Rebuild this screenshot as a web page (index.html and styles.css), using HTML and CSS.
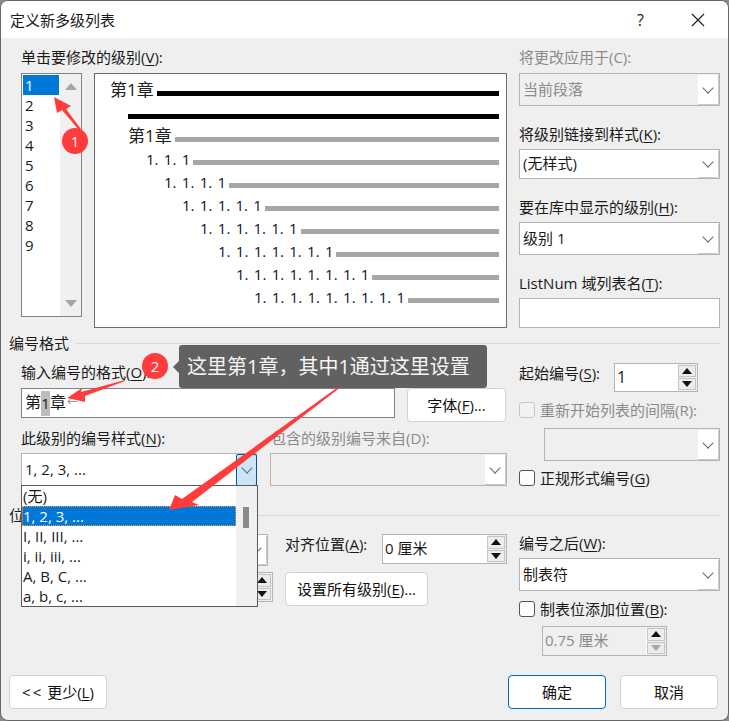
FILE: index.html
```html
<!DOCTYPE html>
<html lang="zh">
<head>
<meta charset="utf-8">
<title>定义新多级列表</title>
<link rel="stylesheet" href="styles.css">
</head>
<body>
<div class="dialog">
  <header class="titlebar">
    <span class="title">定义新多级列表</span>
    <span class="help">?</span>
    <svg class="close" width="14" height="14" viewBox="0 0 14 14"><path d="M1 1L13 13M13 1L1 13" stroke="#222" stroke-width="1.2" fill="none"/></svg>
  </header>
  <main class="panel">
    <section class="columns top">
      <div class="left">
        <div class="label">单击要修改的级别(<u>V</u>):</div>
        <div class="level-row">
          <div class="levels">
            <ul class="level-list">
              <li class="on">1</li><li>2</li><li>3</li><li>4</li><li>5</li><li>6</li><li>7</li><li>8</li><li>9</li>
            </ul>
            <div class="level-scroll"><i class="tri up gray"></i><i class="tri down gray"></i></div>
          </div>
          <div class="preview">
            <div class="pv r1 in0"><span class="big">第1章</span><b></b></div>
            <div class="pv r2"><b></b></div>
            <div class="pv r3 in1"><span class="big">第1章</span><b></b></div>
            <div class="pv r4 in2"><span>1. 1. 1</span><b></b></div>
            <div class="pv r4 in3"><span>1. 1. 1. 1</span><b></b></div>
            <div class="pv r4 in4"><span>1. 1. 1. 1. 1</span><b></b></div>
            <div class="pv r4 in5"><span>1. 1. 1. 1. 1. 1</span><b></b></div>
            <div class="pv r4 in6"><span>1. 1. 1. 1. 1. 1. 1</span><b></b></div>
            <div class="pv r4 in7"><span>1. 1. 1. 1. 1. 1. 1. 1</span><b></b></div>
            <div class="pv r4 in8"><span>1. 1. 1. 1. 1. 1. 1. 1. 1</span><b></b></div>
          </div>
        </div>
      </div>
      <div class="right">
        <div class="label off">将更改应用于(C):</div>
        <div class="select tall disabled"><span>当前段落</span><i class="chev"></i></div>
        <div class="label gap">将级别链接到样式(<u>K</u>):</div>
        <div class="select"><span>(无样式)</span><i class="chev"></i></div>
        <div class="label gap">要在库中显示的级别(<u>H</u>):</div>
        <div class="select tall"><span>级别 1</span><i class="chev"></i></div>
        <div class="label gap">ListNum 域列表名(<u>T</u>):</div>
        <div class="textbox"></div>
      </div>
    </section>

    <div class="legend"><span>编号格式</span></div>
    <section class="columns fmt">
      <div class="left">
        <div class="label">输入编号的格式(<u>O</u>):</div>
        <div class="fmt-row">
          <div class="textbox format"><span>第</span><span class="field">1</span><span>章</span><span class="ret">←</span></div>
          <button class="btn font">字体(<u>F</u>)...</button>
        </div>
        <div class="two labels">
          <div class="label">此级别的编号样式(<u>N</u>):</div>
          <div class="label off">包含的级别编号来自(D):</div>
        </div>
        <div class="two">
          <div class="select tall"><span>1, 2, 3, ...</span><i class="chev focus"></i></div>
          <div class="select tall disabled"><span></span><i class="chev"></i></div>
        </div>
      </div>
      <div class="right">
        <div class="start">
          <div class="label">起始编号(<u>S</u>):</div>
          <div class="spin start-spin"><span>1</span><div class="spin-btns"><i><b class="tri up"></b></i><i><b class="tri down"></b></i></div></div>
        </div>
        <label class="check first off"><i class="box"></i><span>重新开始列表的间隔(R):</span></label>
        <div class="select tall disabled restart"><span></span><i class="chev"></i></div>
        <label class="check"><i class="box"></i><span>正规形式编号(<u>G</u>)</span></label>
      </div>
    </section>

    <div class="legend"><span>位置</span></div>
    <section class="columns pos">
      <div class="left">
        <div class="pos-row one">
          <div class="select align-sel"><span></span><i class="chev"></i></div>
          <div class="label at">对齐位置(<u>A</u>):</div>
          <div class="spin at-spin"><span>0 厘米</span><div class="spin-btns"><i><b class="tri up"></b></i><i><b class="tri down"></b></i></div></div>
        </div>
        <div class="pos-row two-r">
          <div class="spin indent"><span></span><div class="spin-btns"><i><b class="tri up"></b></i><i><b class="tri down"></b></i></div></div>
          <button class="btn all">设置所有级别(<u>E</u>)...</button>
        </div>
      </div>
      <div class="right after">
        <div class="label">编号之后(<u>W</u>):</div>
        <div class="select tall"><span>制表符</span><i class="chev"></i></div>
        <label class="check first"><i class="box"></i><span>制表位添加位置(<u>B</u>):</span></label>
        <div class="spin tab-spin off"><span>0.75 厘米</span><div class="spin-btns"><i><b class="tri up"></b></i><i class="dim"><b class="tri down"></b></i></div></div>
      </div>
    </section>
  </main>
  <footer class="footer">
    <button class="btn foot"><span class="ll">&lt;&lt;</span> 更少(<u>L</u>)</button>
    <button class="btn foot ok">确定</button>
    <button class="btn foot">取消</button>
  </footer>
</div>

<div class="dropdown">
  <ul class="drop-list">
    <li>(无)</li>
    <li class="on">1, 2, 3, ...</li>
    <li>I, II, III, ...</li>
    <li>i, ii, iii, ...</li>
    <li>A, B, C, ...</li>
    <li>a, b, c, ...</li>
  </ul>
  <div class="drop-scroll"><i></i></div>
</div>

<svg class="arrows" width="729" height="721" viewBox="0 0 729 721">
  <path d="M54 97L71 106L66 109L81 129L79 130L62 110L57 113Z"/>
  <path d="M67 398L82 388L81 392L125 380L125 381L85 396L85 402Z"/>
  <path d="M169 510L175 495L182 499L345 382L346 383L192 502L199 505Z"/>
</svg>
<div class="badge b1">1</div>
<div class="badge b2">2</div>
<div class="tip">这里第1章，其中1通过这里设置</div>
</body>
</html>
```
FILE: styles.css
```css
* { box-sizing: border-box; }
html, body { margin: 0; height: 100%; }
body {
  width: 729px;
  height: 721px;
  overflow: hidden;
  background: #8a8a8a;
  font: 15px/20px "Open Sans", "Noto Sans CJK SC", sans-serif;
  color: #1a1a1a;
}
ul { list-style: none; margin: 0; padding: 0; }
i { font-style: normal; display: block; }
u { text-underline-offset: 2px; }

.dialog {
  width: 729px;
  height: 721px;
  border: 1px solid #666;
  border-radius: 8px;
  overflow: hidden;
  background: #efefef;
  display: flex;
  flex-direction: column;
}
.titlebar {
  height: 37px;
  flex: none;
  background: #fff;
  display: flex;
  align-items: center;
  padding: 0 23px 0 9px;
}
.title { flex: 1; }
.help { margin-right: 47px; font-size: 16px; }
.close { display: block; }

.panel { padding: 0 8px 0 20px; flex: none; }
.columns { display: flex; gap: 12px; }
.left { width: 486px; flex: none; }
.right { width: 201px; flex: none; }
.top { height: 295px; padding-top: 11px; }
.fmt { height: 152px; padding-top: 10px; }
.pos { padding-top: 9px; }

.label { height: 20px; line-height: 18px; margin-bottom: 4px; white-space: nowrap; }
.label.gap { margin-top: 19px; }
.top .left > .label, .top .right > .label:first-child { line-height: 16px; }
.off { color: #8b8b8b; }

.level-row { display: flex; gap: 12px; }
.levels {
  width: 61px;
  height: 244px;
  border: 1px solid #82828a;
  background: #fff;
  display: flex;
}
.level-list { flex: 1; padding: 1px 0 0 1px; }
.level-list li { height: 20px; padding-left: 2px; width: 36px; }
.level-list li.on { background: #0078d7; color: #fff; }
.level-scroll {
  width: 21px;
  background: #f0f0f0;
  display: flex;
  flex-direction: column;
  justify-content: space-between;
  align-items: center;
  padding: 9px 0;
}

.tri { display: block; width: 0; height: 0; border-left: 5px solid transparent; border-right: 5px solid transparent; }
.tri.up { border-bottom: 6px solid #111; }
.tri.down { border-top: 6px solid #111; }
.tri.gray.up { border-left-width: 6px; border-right-width: 6px; border-bottom: 7px solid #a6a6a6; }
.tri.gray.down { border-left-width: 6px; border-right-width: 6px; border-top: 7px solid #a6a6a6; }

.preview {
  width: 413px;
  height: 255px;
  border: 1px solid #6e6e6e;
  background: #fff;
  padding: 5px 7px 0 0;
}
.pv { height: 23px; display: flex; align-items: center; gap: 3px; color: #0a1430; word-spacing: 1.4px; white-space: nowrap; }
.pv span { position: relative; top: -1px; }
.pv .big { font-size: 17px; color: #222; }
.pv b { flex: 1; height: 5px; margin-top: 5px; background: #a6a6a6; }
.r1 b, .r2 b { background: #000; }
.r1 { height: 24px; }
.r2 { height: 22px; padding-left: 33px; }
.in0 { padding-left: 15px; }
.in1 { padding-left: 33px; }
.in2 { padding-left: 51px; }
.in3 { padding-left: 69px; }
.in4 { padding-left: 87px; }
.in5 { padding-left: 105px; }
.in6 { padding-left: 123px; }
.in7 { padding-left: 141px; }
.in8 { padding-left: 159px; }

.select {
  height: 30px;
  border: 1px solid #b4b4b4;
  background: #fff;
  display: flex;
  align-items: center;
  justify-content: space-between;
}
.select > span { padding-left: 3px; white-space: nowrap; position: relative; top: -1px; }
.select.tall { height: 33px; }
.select.disabled { background: #efefef; color: #8b8b8b; }
.chev {
  width: 20px;
  height: calc(100% - 2px);
  margin-right: 1px;
  background: #fff;
  box-shadow: 0 1px 0 #c8c8c8, 1px 0 0 #c8c8c8;
  display: flex;
  align-items: center;
  justify-content: center;
  flex: none;
}
.chev::after {
  content: "";
  width: 7px;
  height: 7px;
  margin-top: -4px;
  border-right: 1px solid #666;
  border-bottom: 1px solid #666;
  transform: rotate(45deg);
}
.chev.focus {
  width: 21px;
  height: calc(100% + 1px);
  margin-right: -1px;
  background: #cce4f7;
  border: 1px solid #005499;
  border-radius: 2px;
  box-shadow: none;
}
.textbox { height: 30px; border: 1px solid #b4b4b4; background: #fff; }

.legend { height: 20px; display: flex; align-items: center; gap: 6px; margin-left: -12px; }
.legend::after { content: ""; flex: 1; height: 1px; background: #d9d9d9; }

.fmt-row { display: flex; gap: 12px; height: 34px; margin-top: 5px; margin-bottom: 7px; }
.fmt .left > .label { margin-bottom: 0; }
.format { width: 374px; border-color: #82828a; padding: 2px 0 0 3px; display: flex; font-size: 16px; height: 30px; }
.format span { line-height: 22px; }
.format .field { background: #bdbdbd; width: 9px; height: 25px; font-size: 15px; line-height: 25px; text-align: center; }
.format .ret { font-size: 11px; color: #888; margin-left: 1px; }

.btn {
  font: inherit;
  color: #111;
  background: #fff;
  border: 1px solid #cfd3d8;
  border-radius: 4px;
  padding: 0;
  height: 34px;
}
.font { width: 99px; }
.two { display: grid; grid-template-columns: 236px 237px; column-gap: 13px; }
.labels .label:last-child { padding-left: 1px; }
.start { display: flex; align-items: flex-start; justify-content: space-between; padding-right: 22px; }
.start .label { margin-top: 1px; }

.spin {
  height: 30px;
  border: 1px solid #b4b4b4;
  background: #fff;
  display: flex;
  align-items: center;
  justify-content: space-between;
  padding-left: 2px;
}
.spin > span { position: relative; top: -1px; }
.spin-btns { width: 20px; height: 100%; padding: 1px 1px 1px 0; display: flex; flex-direction: column; gap: 1px; flex: none; background: #efefef; border-left: 1px solid #fff; }
.spin-btns i { flex: 1; background: #ececec; border: 1px solid #c4c4c4; display: flex; align-items: center; justify-content: center; }
.spin-btns i.dim .tri { border-top-color: #a6a6a6; }
.start-spin { width: 84px; height: 29px; }
.start-spin span { font-size: 16px; }
.at-spin { width: 125px; }
.tab-spin { width: 125px; margin: 9px 0 0 23px; background: #efefef; }

.check { display: flex; align-items: center; gap: 5px; height: 16px; white-space: nowrap; }
.check.first { margin-top: 10px; }
.box { width: 16px; height: 16px; border: 1px solid #555; border-radius: 3px; background: #fff; flex: none; }
.check.off .box { border-color: #c8c8c8; background: #f2f2f2; }
.restart { margin: 10px 0 9px 25px; }
.fmt .right .check:last-child { margin-top: 9px; }

.pos-row { display: flex; }
.pos-row.one { height: 32px; margin-bottom: 6px; }
.align-sel { width: 127px; height: 32px; margin-left: 120px; margin-right: 17px; }
.at { width: 97px; height: 20px; margin-top: 1px; }
.indent { width: 123px; margin-left: 129px; margin-right: 12px; }
.all { width: 143px; }

.footer {
  margin-top: auto;
  padding: 0 10px 11px 8px;
  display: flex;
  gap: 14px;
}
.foot { width: 98px; height: 34px; }
.ok { margin-left: auto; border-color: #0067c0; }
.ll { letter-spacing: 2px; }

.dropdown {
  position: absolute;
  left: 21px;
  top: 485px;
  width: 237px;
  height: 122px;
  border: 1px solid #5a5a5a;
  background: #fff;
  display: flex;
}
.drop-list { flex: 1; }
.drop-list li { height: 20px; padding-left: 1px; white-space: nowrap; }
.drop-list li.on { background: #0078d7; color: #fff; outline: 1px dotted #ff9a2e; outline-offset: -1px; }
.drop-scroll { width: 21px; background: #f0f0f0; padding: 21px 0 0 7px; }
.drop-scroll i { width: 6px; height: 21px; background: #8a8a8a; }

.arrows { position: absolute; left: 0; top: 0; pointer-events: none; }
.arrows path { fill: #ff3b3b; }

.badge {
  position: absolute;
  width: 26px;
  height: 26px;
  border-radius: 50%;
  background: #ff3b3b;
  color: #fff;
  text-align: center;
  line-height: 26px;
  font-size: 15px;
}
.b1 { left: 62px; top: 128px; }
.b2 { left: 142px; top: 353px; }

.tip {
  position: absolute;
  left: 179px;
  top: 345px;
  width: 308px;
  height: 43px;
  background: #616161;
  border-radius: 3px;
  color: #f5f5f5;
  font-size: 20px;
  line-height: 43px;
  padding-left: 8px;
  white-space: nowrap;
}
.tip::before {
  content: "";
  position: absolute;
  left: -6px;
  top: 16px;
  border-top: 6px solid transparent;
  border-bottom: 6px solid transparent;
  border-right: 6px solid #616161;
}
```
